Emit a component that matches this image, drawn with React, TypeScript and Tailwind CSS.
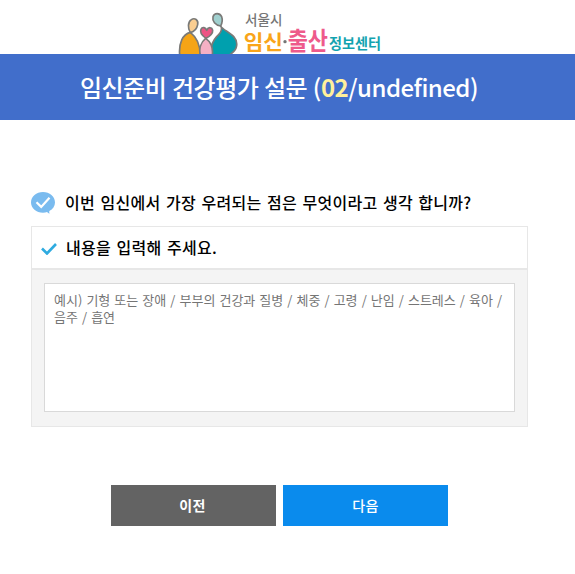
const PLACEHOLDER = '예시) 기형 또는 장애 / 부부의 건강과 질병 / 체중 / 고령 / 난임 / 스트레스 / 육아 / 음주 / 흡연'

function Logo() {
  return (
    <svg className="ml-[170px] block h-[54px] w-[220px]" viewBox="0 0 660 162" role="img">
      <g stroke="#7a7a78" strokeWidth="5" strokeLinecap="round" strokeLinejoin="round">
        {/* left figure */}
        <path d="M29 165C26 128 38 103 61 97C75 108 91 126 90 165Z" fill="#f5a416" />
        <path d="M61 98C53 85 53 66 64 59C74 52 86 60 83 74C81 85 72 95 61 98Z" fill="#fbce91" />
        {/* right figure */}
        <path d="M152 78C160 94 204 103 200 136C199 150 189 158 178 165H126C120 145 126 126 140 110C154 97 158 87 152 78Z" fill="#00a0ae" />
        <path d="M152 78C136 76 126 64 129 50C133 38 149 38 155 50C159 61 156 70 152 78Z" fill="#a0d0cf" />
        {/* child with a heart */}
        <path d="M91 165C86 145 94 126 107 115C121 125 130 140 127 165Z" fill="#f5b0c4" />
        <path d="M108 115C98 108 88 99 93 88C97 79 107 82 110 91C115 80 126 81 128 91C129 102 119 109 108 115Z" fill="#ed5484" />
      </g>
      <g className="font-['Liberation_Sans','Noto_Sans_CJK_KR',sans-serif]">
        <text x="225" y="76" fontSize="41" textLength="112" lengthAdjust="spacingAndGlyphs" fontWeight="500" fill="#757575">서울시</text>
        <text x="221" y="151" fontSize="62" textLength="118" lengthAdjust="spacingAndGlyphs" fontWeight="700" fill="#f9a51a">임신</text>
        <circle cx="345" cy="125" r="5" fill="#757575" />
        <text x="353" y="150" fontSize="76" textLength="121" lengthAdjust="spacingAndGlyphs" fontWeight="700" fill="#ee5a8b">출산</text>
        <text x="477" y="148" fontSize="44" textLength="156" lengthAdjust="spacingAndGlyphs" fontWeight="700" fill="#13a3af">정보센터</text>
      </g>
    </svg>
  )
}

function BubbleCheck() {
  return (
    <svg className="h-6 w-6 shrink-0" viewBox="0 0 24 24">
      <path d="M12 0C5.4 0 0 4.7 0 10.4s5.4 10.3 12 10.3c1.6 0 2.8-.2 4-.6.7.8 1.6 1.3 2.5 1.6-.3-.9-.3-1.8-.2-2.7C21.8 17.2 24 14 24 10.4 24 4.7 18.6 0 12 0Z" fill="#7abbef" />
      <path d="m5.5 10.2 4.7 4.7 8.3-9.2" fill="none" stroke="#fff" strokeWidth="2.2" />
    </svg>
  )
}

export default function App() {
  return (
    <div className="h-[574px] bg-white font-['Noto_Sans_CJK_KR',sans-serif] text-black">
      <header>
        <Logo />
        <h1 className="h-[66px] bg-[#416ecb] pr-[17px] text-center text-2xl leading-[66px] font-medium tracking-[-0.5px] [word-spacing:0.8px] text-white">
          임신준비 건강평가 설문 (<strong className="font-bold text-[#fff09b]">02</strong>/undefined)
        </h1>
      </header>

      <main className="ml-[31px] w-[497px] pt-[72px]">
        <div className="flex h-[34px] gap-[10px]">
          <BubbleCheck />
          <h2 className="text-base leading-5 font-medium tracking-[0.28px] whitespace-nowrap [word-spacing:1.6px]">
            이번 임신에서 가장 우려되는 점은 무엇이라고 생각 합니까?
          </h2>
        </div>

        <section className="border border-[#e7e7e7]">
          <div className="flex h-[42px] items-center border-b border-[#e7e7e7] pl-[9px]">
            <svg className="mt-0.5 h-3 w-4" viewBox="0 0 16 12">
              <path d="m1 5.5 5 5L15 1" fill="none" stroke="#2fabe0" strokeWidth="2.6" />
            </svg>
            <h3 className="-mt-px ml-[9px] text-base leading-5 font-medium tracking-[0.28px] [word-spacing:1.6px]">내용을 입력해 주세요.</h3>
          </div>
          <div className="h-[157px] border-t border-[#e7e7e7] bg-[#f4f4f4] px-3 pt-[13px]">
            <textarea
              className="block h-[129px] w-full resize-none border border-[#d9d9d9] bg-white px-[9px] py-[7px] text-[13px] leading-[17px] [word-spacing:1.15px] placeholder:text-[#757575] placeholder:opacity-100"
              placeholder={PLACEHOLDER}
            />
          </div>
        </section>

        <div className="mt-[58px] flex justify-center gap-[7px] text-sm leading-[41px] tracking-[0.3px] text-white">
          <button type="button" className="h-[41px] w-[165px] bg-[#636363] pr-0.5 font-bold">이전</button>
          <button type="button" className="h-[41px] w-[165px] bg-[#0a8bed] font-medium">다음</button>
        </div>
      </main>
    </div>
  )
}
